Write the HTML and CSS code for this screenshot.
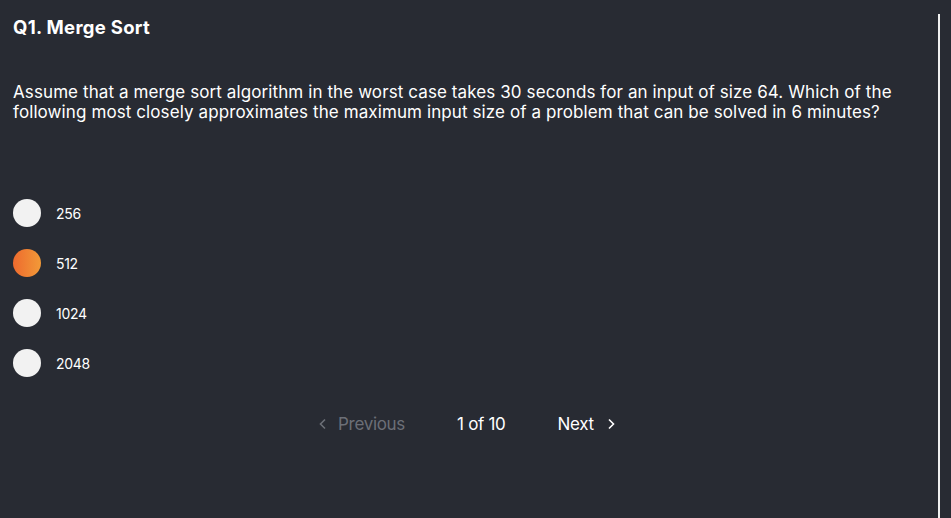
FILE: index.html
```html
<!DOCTYPE html>
<html>
<head>
<meta charset="utf-8">
<link rel="stylesheet" href="styles.css">
</head>
<body>
<div class="page">
  <main class="quiz">
    <h1 class="title">Q1. Merge Sort</h1>
    <p class="question">Assume that a merge sort algorithm in the worst case takes 30 seconds for an input of size 64. Which of the following most closely approximates the maximum input size of a problem that can be solved in 6 minutes?</p>
    <ul class="options">
      <li class="option"><span class="radio"></span><span class="label">256</span></li>
      <li class="option"><span class="radio selected"></span><span class="label">512</span></li>
      <li class="option"><span class="radio"></span><span class="label">1024</span></li>
      <li class="option"><span class="radio"></span><span class="label">2048</span></li>
    </ul>
    <nav class="pager">
      <span class="prev"><svg width="10" height="12" viewBox="0 0 10 12"><path d="M7 1.5 L2.5 6 L7 10.5" fill="none" stroke="currentColor" stroke-width="1.6"/></svg>Previous</span>
      <span class="count">1 of 10</span>
      <span class="next">Next<svg width="10" height="12" viewBox="0 0 10 12"><path d="M3 1.5 L7.5 6 L3 10.5" fill="none" stroke="currentColor" stroke-width="1.6"/></svg></span>
    </nav>
  </main>
  <div class="divider"></div>
</div>
</body>
</html>
```
FILE: styles.css
```css
html, body {
  margin: 0;
  padding: 0;
  background: #282b33;
  height: 100%;
  overflow: hidden;
}
body {
  font-family: "Inter", "Lato", sans-serif;
  color: #ffffff;
}
.page {
  display: flex;
  height: 518px;
}
.quiz {
  flex: 1;
  padding: 0 0 0 13px;
}
.title {
  margin: 16px 0 0;
  font-size: 18.5px;
  font-weight: 700;
  line-height: 22px;
  letter-spacing: 0.3px;
}
.question {
  margin: 44px 0 0;
  font-size: 17px;
  line-height: 20px;
  max-width: 900px;
  font-weight: 400;
  letter-spacing: 0.1px;
}
.options {
  list-style: none;
  margin: 77px 0 0;
  padding: 0;
  display: flex;
  flex-direction: column;
  gap: 22px;
}
.option {
  display: flex;
  align-items: center;
  height: 28px;
}
.radio {
  width: 28px;
  height: 28px;
  border-radius: 50%;
  background: #f2f2f2;
  flex: none;
}
.radio.selected {
  background: linear-gradient(90deg, #ee6a2e, #f29a38);
}
.label {
  margin-left: 15px;
  font-size: 14px;
  letter-spacing: -0.3px;
}
.pager {
  display: flex;
  align-items: center;
  margin: 37px 0 0 305px;
  font-size: 17px;
  letter-spacing: -0.3px;
}
.prev {
  display: flex;
  align-items: center;
  gap: 10px;
  color: #6c6f77;
}
.count {
  margin-left: 52px;
}
.next {
  display: flex;
  align-items: center;
  gap: 12px;
  margin-left: 52px;
}
.divider {
  width: 2px;
  background: #f0f0f0;
  margin: 14px 11px 0 0;
}
```
